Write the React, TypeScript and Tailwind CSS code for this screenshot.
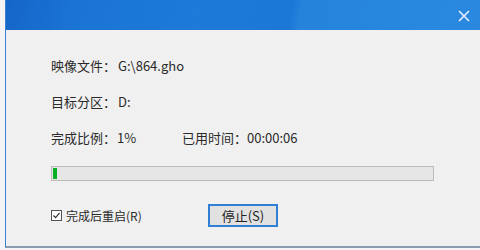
import React from 'react';

const App = () => {
  return (
    <div className="w-[480px] h-[250px] bg-[#f4f4f6] overflow-hidden" style={{ fontFamily: '"Noto Sans CJK SC", "Noto Sans", sans-serif' }}>
      <div className="ml-[5px] h-[248px] flex flex-col bg-[#f0f0f0] border-l border-[#3a7fd0] border-b-2 border-b-[#8a9cb0]">
        <div className="h-[30px] flex items-center justify-end pr-[10px] bg-[linear-gradient(100deg,#1566c8_0%,#1a74d6_15%,#1d7ad9_40%,#1b78d6_60%,#2583dc_62%,#2a89df_100%)]">
          <svg width="12" height="12" viewBox="0 0 12 12" className="mt-[1px]">
            <path d="M1 1 L11 11 M11 1 L1 11" stroke="#e6f0fb" strokeWidth="1.6" />
          </svg>
        </div>
        <div className="flex flex-col pl-[45px] text-[13px] text-[#2a2a2a]">
          <div className="h-[18px] mt-[27px] flex items-center">
            <span>映像文件：</span>
            <span className="ml-[2px]">G:\864.gho</span>
          </div>
          <div className="h-[18px] mt-[18px] flex items-center">
            <span>目标分区：</span>
            <span className="ml-[2px]">D:</span>
          </div>
          <div className="h-[18px] mt-[18px] flex items-center">
            <span className="w-[131px] flex">
              <span>完成比例：</span>
              <span className="ml-[1px]">1%</span>
            </span>
            <span>已用时间：</span>
            <span>00:00:06</span>
          </div>
          <div className="mt-[19px] w-[383px] h-[15px] bg-[#e6e6e6] border border-[#bcbcbc] p-[1px] flex">
            <div className="w-[4px] h-full bg-[#06b025]" />
          </div>
          <div className="mt-[23px] flex items-center">
            <span className="w-[11px] h-[11px] border border-[#555] bg-white flex items-center justify-center">
              <svg width="9" height="9" viewBox="0 0 9 9">
                <path d="M1.5 4.5 L3.6 6.6 L7.6 1.8" stroke="#333" strokeWidth="1.2" fill="none" />
              </svg>
            </span>
            <span className="ml-[4px] w-[142px] text-[12px]">完成后重启(R)</span>
            <button className="w-[70px] h-[23px] bg-[#e1e1e1] border-2 border-[#2f7fd4] text-[13px] text-[#222] flex items-center justify-center">
              停止(S)
            </button>
          </div>
        </div>
      </div>
    </div>
  );
};

export default App;
